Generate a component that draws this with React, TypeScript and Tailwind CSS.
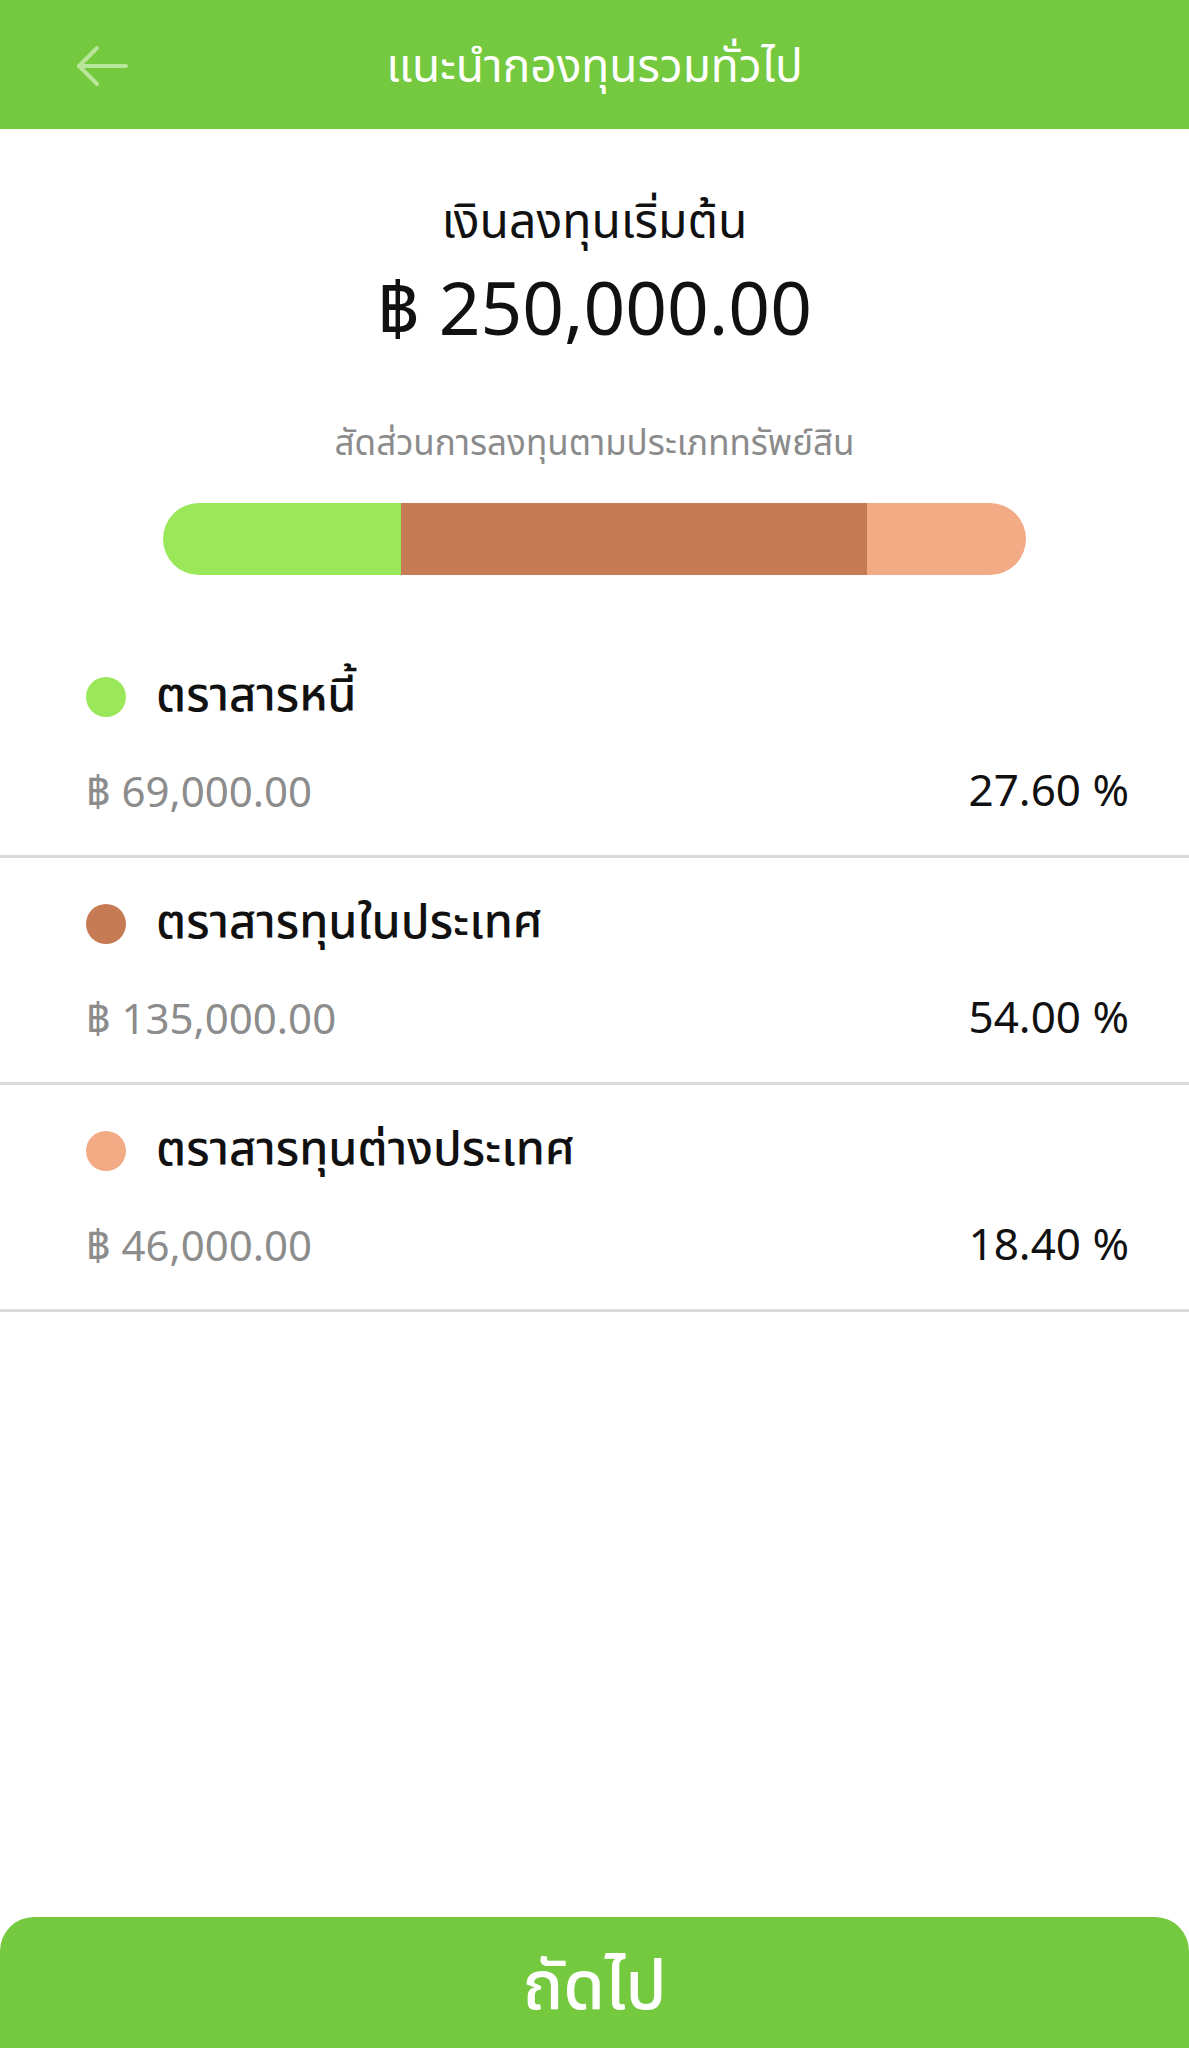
import React from 'react';

type Asset = {
  name: string;
  color: string;
  amount: string;
  percent: string;
  share: number;
};

const assets: Asset[] = [
  { name: 'ตราสารหนี้', color: 'bg-[#9ae85a]', amount: '69,000.00', percent: '27.60', share: 27.6 },
  { name: 'ตราสารทุนในประเทศ', color: 'bg-[#c77b55]', amount: '135,000.00', percent: '54.00', share: 54 },
  { name: 'ตราสารทุนต่างประเทศ', color: 'bg-[#f2ab85]', amount: '46,000.00', percent: '18.40', share: 18.4 },
];

const font = { fontFamily: '"Noto Sans Thai", "Noto Sans", "DejaVu Sans", sans-serif' };

const BackArrow = () => (
  <svg width="52" height="42" viewBox="0 0 52 42" fill="none" stroke="#b8e79c" strokeWidth="4" strokeLinecap="round" strokeLinejoin="round">
    <path d="M50 21H3" />
    <path d="M21 3L3 21l18 18" />
  </svg>
);

export default function App() {
  return (
    <div className="flex h-[2048px] flex-col bg-white text-[#111]" style={font}>
      <header className="grid h-[129px] grid-cols-[1fr_auto_1fr] items-center bg-[#74c93e]">
        <div className="pl-[76px] pt-[2px]">
          <BackArrow />
        </div>
        <h1 className="mt-[8px] text-[46px] font-normal text-white">แนะนำกองทุนรวมทั่วไป</h1>
        <div />
      </header>

      <section className="flex flex-col items-center pt-[66px]">
        <div className="text-[48px] leading-[58px]">เงินลงทุนเริ่มต้น</div>
        <div className="mt-[15px] text-[73px] leading-[90px]">฿ 250,000.00</div>
        <div className="mt-[67px] text-[35px] leading-[40px] text-[#8b8b8b]">สัดส่วนการลงทุนตามประเภททรัพย์สิน</div>
        <div className="mt-[38px] flex h-[72px] w-[863px] overflow-hidden rounded-full">
          {assets.map((a) => (
            <div key={a.name} className={a.color} style={{ width: `${a.share}%` }} />
          ))}
        </div>
      </section>

      <ul className="mt-[56px]">
        {assets.map((a) => (
          <li key={a.name} className="border-b-[3px] border-[#dadada] pl-[86px] pr-[60px] pt-[40px] pb-[38px]">
            <div className="flex items-center gap-[30px]">
              <span className={`h-[40px] w-[40px] rounded-full ${a.color}`} />
              <span className="text-[47px] font-medium leading-[52px]">{a.name}</span>
            </div>
            <div className="mt-[46px] flex items-end justify-between">
              <span className="text-[42px] leading-[46px] text-[#8c8c8c]">฿ {a.amount}</span>
              <span className="text-[44px] leading-[48px]">{a.percent} %</span>
            </div>
          </li>
        ))}
      </ul>

      <button className="mt-auto flex h-[131px] w-full items-center justify-center rounded-t-[34px] bg-[#74c93e] pt-[14px] text-[67px] font-medium text-white">
        ถัดไป
      </button>
    </div>
  );
}
